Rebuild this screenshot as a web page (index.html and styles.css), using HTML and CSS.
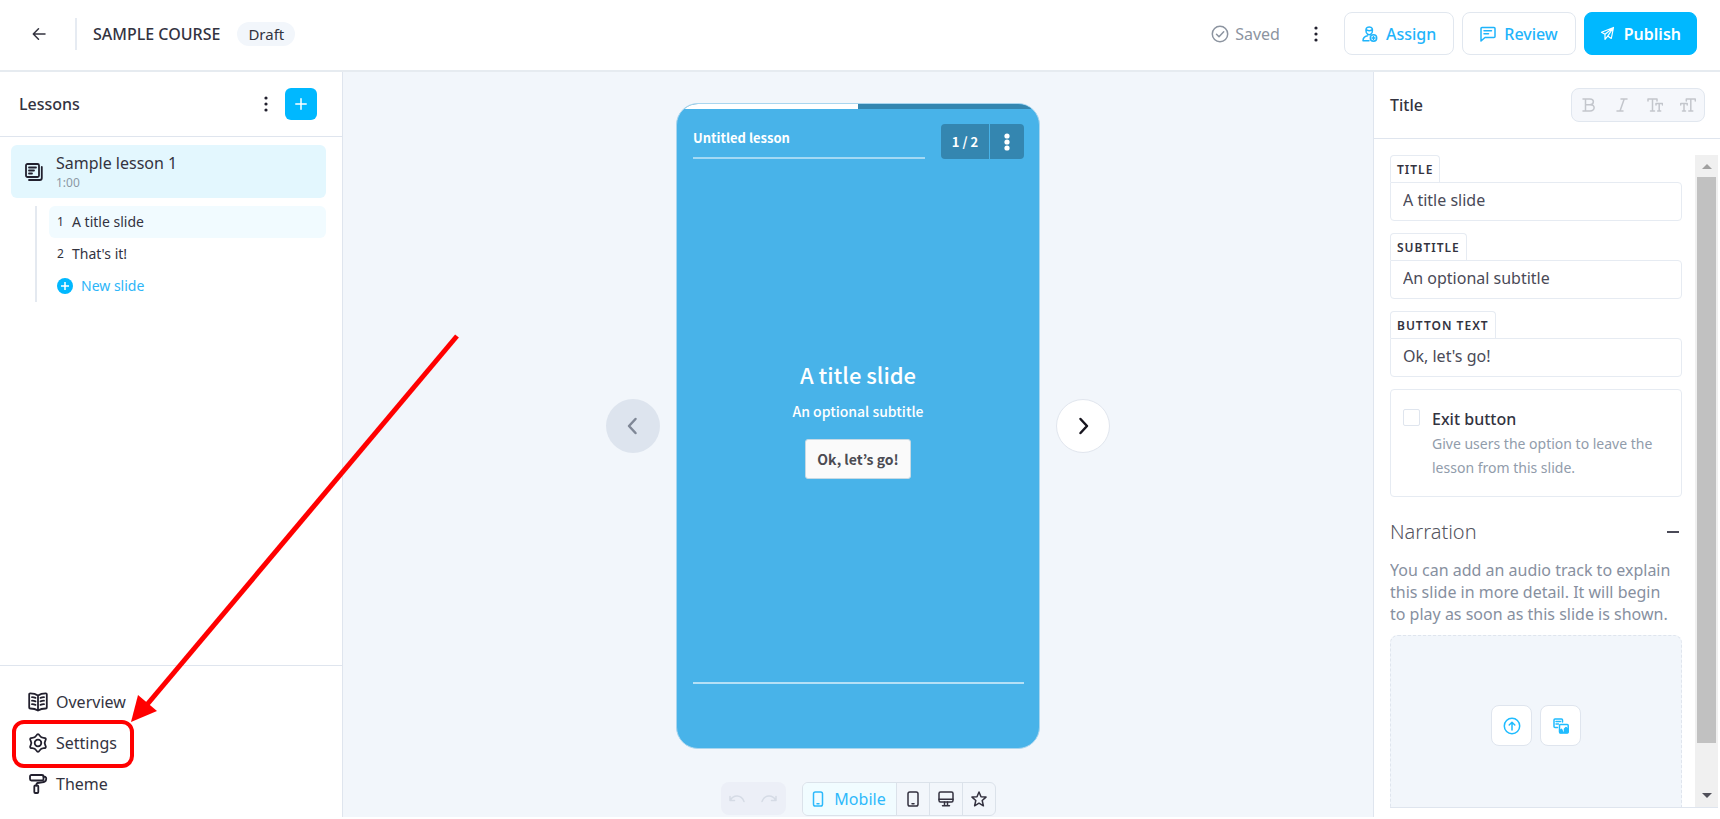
FILE: index.html
```html
<!DOCTYPE html>
<html lang="en">

<head>
    <meta charset="utf-8">
    <title>Sample course</title>
    <link rel="stylesheet" href="styles.css">
</head>

<body>
    <header class="topbar">
        <button class="back" aria-label="Back">
            <svg class="icon" width="14" height="14" viewBox="0 0 14 14"><path d="M13 7H1.500M6.500 1.800L1.300 7l5.200 5.200"/></svg>
        </button>
        <h1>SAMPLE COURSE</h1>
        <span class="badge">Draft</span>
        <div class="actions">
            <span class="saved">
                <svg class="icon" width="18" height="18" viewBox="0 0 18 18"><circle cx="9" cy="9" r="7.700"/><path d="M5.500 9.300l2.500 2.500 4.700-5"/></svg>
                Saved
            </span>
            <button class="dots" aria-label="More">
                <svg width="4" height="16" viewBox="0 0 4 16"><circle cx="2" cy="2" r="1.600"/><circle cx="2" cy="8" r="1.600"/><circle cx="2" cy="14" r="1.600"/></svg>
            </button>
            <button class="btn">
                <svg class="icon" width="16" height="16" viewBox="0 0 16 16"><path d="M4.300 6.500C3.300 2.800 4.300 1 7.200 1s3.900 1.800 2.900 5.500C9.500 8 8.700 8.800 7.200 8.800S4.900 8 4.300 6.500zM4.600 3.900c1.800 1 3.600 1 5.200 0M7 14.700H1c0-3 1.500-4.200 4.500-4.900"/><circle cx="11.500" cy="12" r="3.200"/><path d="M11.500 10.500v3M10 12h3"/></svg>
                Assign
            </button>
            <button class="btn">
                <svg class="icon" width="16" height="16" viewBox="0 0 16 16"><path d="M2 1.500h12a1 1 0 0 1 1 1v8a1 1 0 0 1-1 1H5L1 15V2.500a1 1 0 0 1 1-1zM4 4.800h7.500M4 7.800h4.500"/></svg>
                Review
            </button>
            <button class="btn primary">
                <svg class="icon" width="16" height="16" viewBox="0 0 16 16"><path d="M13.500 1.500L1.500 6.300l3.500 2 8.500-6.800-2.200 11-3.600-2.400zM5 8.300v5l2.700-3.200"/></svg>
                Publish
            </button>
        </div>
    </header>

    <main class="workspace">
        <aside class="sidebar">
            <div class="sidebar-head">
                <h2>Lessons</h2>
                <button class="dots" aria-label="Lesson options">
                    <svg width="4" height="16" viewBox="0 0 4 16"><circle cx="2" cy="2" r="1.600"/><circle cx="2" cy="8" r="1.600"/><circle cx="2" cy="14" r="1.600"/></svg>
                </button>
                <button class="add" aria-label="Add lesson">
                    <svg class="icon" width="12" height="12" viewBox="0 0 12 12"><path d="M6 .8v10.400M.8 6h10.400"/></svg>
                </button>
            </div>

            <a class="lesson" href="#">
                <svg class="icon" width="18" height="18" viewBox="0 0 18 18"><rect x="1" y="1" width="13" height="13" rx="1.500"/><path d="M4 4.500h7M4 7.500h5M4 10.500h3M16.800 4v11a2 2 0 0 1-2 2H4"/></svg>
                <span>
                    <span class="lesson-name">Sample lesson 1</span>
                    <span class="lesson-time">1:00</span>
                </span>
            </a>
            <div class="slides">
                <a class="slide active" href="#"><span class="num">1</span>A title slide</a>
                <a class="slide" href="#"><span class="num">2</span>That's it!</a>
                <button class="slide new">
                    <svg width="16" height="16" viewBox="0 0 16 16"><circle cx="8" cy="8" r="8" fill="#00b8ff"/><path d="M8 4v8M4 8h8" stroke="#fff" stroke-width="1.500"/></svg>
                    New slide
                </button>
            </div>

            <nav class="sidebar-nav">
                <a href="#">
                    <svg class="icon" width="20" height="20" viewBox="0 0 20 20"><path d="M10 3.500C8 2 5 1.300 2.200 1.300A1 1 0 0 0 1.200 2.300v13.200a1 1 0 0 0 1 1c2.800 0 5.800.7 7.800 2 2-1.300 5-2 7.800-2a1 1 0 0 0 1-1V2.300a1 1 0 0 0-1-1C15 1.300 12 2 10 3.500zM10 3.500v15M4 5.200c1.300 0 2.500.2 3.500.6M4 8.700c1.300 0 2.500.2 3.500.6M4 12.200c1.300 0 2.500.2 3.500.6M16 5.200c-1.300 0-2.500.2-3.500.6M16 8.700c-1.300 0-2.500.2-3.500.6M16 12.200c-1.300 0-2.500.2-3.500.6"/></svg>
                    Overview
                </a>
                <a class="marked" href="#">
                    <svg class="icon" width="20" height="20" viewBox="0 0 20 20"><circle cx="10" cy="10" r="3.300"/><path d="M8.300 2.600Q10-.4 11.700 2.600 13 4.800 15.600 4.800 19 4.800 17.300 7.800 16 10 17.300 12.200 19 15.200 15.600 15.200 13 15.200 11.700 17.400 10 20.400 8.300 17.400 7 15.200 4.400 15.200 1 15.200 2.700 12.200 4 10 2.700 7.800 1 4.800 4.400 4.800 7 4.800 8.300 2.600z"/></svg>
                    Settings
                    <svg class="arrow" width="330" height="392" viewBox="0 0 330 392"><path d="M326 2L14 373" stroke="#f00" stroke-width="5"/><path d="M0 388L7 361L26 377z" fill="#f00"/></svg>
                </a>
                <a href="#">
                    <svg class="icon" width="20" height="20" viewBox="0 0 20 20"><rect x="2" y="1" width="13.500" height="5.500" rx="1.500"/><path d="M15.500 2.500c3 .3 3 1.500 2.500 3.500-.3 1.500-1.500 2-4 2.300l-4.500.7c-1 .2-1.200.8-1.200 2.500"/><rect x="6.300" y="11.500" width="4" height="7.500" rx="1"/></svg>
                    Theme
                </a>
            </nav>
        </aside>

        <section class="canvas">
            <div class="stage">
                <button class="step" aria-label="Previous slide" disabled>
                    <svg class="icon" width="20" height="20" viewBox="0 0 20 20"><path d="M12.500 3L6 10l6.500 7"/></svg>
                </button>
                <article class="phone">
                    <div class="progress"><span></span></div>
                    <div class="phone-head">
                        <div class="phone-title">Untitled lesson</div>
                        <div class="pager">
                            <span>1 / 2</span>
                            <button aria-label="Slide menu">
                                <svg width="6" height="18" viewBox="0 0 6 18"><circle cx="3" cy="3" r="2.600"/><circle cx="3" cy="9" r="2.600"/><circle cx="3" cy="15" r="2.600"/></svg>
                            </button>
                        </div>
                    </div>
                    <div class="phone-body">
                        <h2>A title slide</h2>
                        <p>An optional subtitle</p>
                        <button>Ok, let’s go!</button>
                    </div>
                    <div class="phone-foot"></div>
                </article>
                <button class="step next" aria-label="Next slide">
                    <svg class="icon" width="20" height="20" viewBox="0 0 20 20"><path d="M7.500 3L14 10l-6.500 7"/></svg>
                </button>
            </div>

            <div class="canvas-tools">
                <div class="history">
                    <button aria-label="Undo" disabled>
                        <svg class="icon" width="16" height="10" viewBox="0 0 16 10"><path d="M1 2.500v4h4.500M1.500 6.200C4 1 12 0 15 7.500"/></svg>
                    </button>
                    <button aria-label="Redo" disabled>
                        <svg class="icon" width="16" height="10" viewBox="0 0 16 10"><path d="M15 2.500v4h-4.500M14.500 6.200C12 1 4 0 1 7.500"/></svg>
                    </button>
                </div>
                <div class="devices">
                    <button class="current">
                        <svg class="icon" width="12" height="16" viewBox="0 0 12 16"><rect x="1.500" y="1" width="9" height="14" rx="1.800"/><path d="M5 12.700h2"/></svg>
                        Mobile
                    </button>
                    <button aria-label="Tablet">
                        <svg class="icon" width="12" height="16" viewBox="0 0 12 16"><rect x="1" y="1" width="10" height="14" rx="1.800"/><path d="M5 12.700h2"/></svg>
                    </button>
                    <button aria-label="Desktop">
                        <svg class="icon" width="16" height="16" viewBox="0 0 16 16"><rect x="1" y="1" width="14" height="10" rx="1.500"/><path d="M1 8.300h14M6.500 11v3.500M9.500 11v3.500M4.500 14.700h7"/></svg>
                    </button>
                    <button aria-label="Favourites">
                        <svg class="icon" width="16" height="16" viewBox="0 0 16 16"><path d="M8 1l2 4.700 5 .4-3.800 3.400 1.200 5.300L8 12.200l-4.400 2.600 1.200-5.300L1 6.100l5-.4z"/></svg>
                    </button>
                </div>
            </div>
        </section>

        <aside class="panel">
            <div class="panel-head">
                <h2>Title</h2>
                <div class="format">
                    <button aria-label="Bold" disabled>
                        <svg class="icon" width="16" height="16" viewBox="0 0 16 16"><path d="M2 2h7c4.500 0 4.500 5.700 0 5.700H4.500M9 7.700c5.500 0 5.500 6.300 0 6.300H2M4.500 2v12"/></svg>
                    </button>
                    <button aria-label="Italic" disabled>
                        <svg class="icon" width="16" height="16" viewBox="0 0 16 16"><path d="M7 2h6M3 14h6M10.200 2L6 14"/></svg>
                    </button>
                    <button aria-label="Decrease text size" disabled>
                        <svg class="icon" width="16" height="16" viewBox="0 0 16 16"><path d="M1 4V2h9v2M5.500 2v12M3.500 14h4M9 8V6.500h6.500V8M12.200 6.500V14M10.700 14h3"/></svg>
                    </button>
                    <button aria-label="Increase text size" disabled>
                        <svg class="icon" width="16" height="16" viewBox="0 0 16 16"><path d="M6.300 4V2h9v2M10.800 2v12M8.800 14h4M.7 8V6.500h6.500V8M4 6.500V14M2.500 14h3"/></svg>
                    </button>
                </div>
            </div>

            <div class="panel-body">
                <form class="fields">
                    <div class="field">
                        <label for="title">TITLE</label>
                        <input id="title" type="text" value="A title slide">
                    </div>
                    <div class="field">
                        <label for="subtitle">SUBTITLE</label>
                        <input id="subtitle" type="text" value="An optional subtitle">
                    </div>
                    <div class="field">
                        <label for="button-text">BUTTON TEXT</label>
                        <input id="button-text" type="text" value="Ok, let's go!">
                    </div>

                    <div class="option">
                        <input id="exit" type="checkbox">
                        <label for="exit">
                            <strong>Exit button</strong>
                            <span>Give users the option to leave the lesson from this slide.</span>
                        </label>
                    </div>

                    <div class="section-head">
                        <h3>Narration</h3>
                        <button type="button" aria-label="Collapse"></button>
                    </div>
                    <p class="hint">You can add an audio track to explain this slide in more detail. It will begin to play as soon as this slide is shown.</p>
                    <div class="dropzone">
                        <button type="button" aria-label="Upload">
                            <svg class="icon" width="18" height="18" viewBox="0 0 18 18"><circle cx="9" cy="9" r="7.700"/><path d="M9 13V5.500M6.200 8L9 5.200 11.800 8"/></svg>
                        </button>
                        <button type="button" aria-label="Media library">
                            <svg class="icon" width="16" height="16" viewBox="0 0 16 16"><path d="M4.500 9.500H2a1 1 0 0 1-1-1V2a1 1 0 0 1 1-1h6.500a1 1 0 0 1 1 1v2M3 3.500h4.500M3 6h2.500"/><rect x="6.500" y="6.500" width="8.700" height="8.500" rx="1"/><path d="M7 14.800v-2.500l1.500-1 1.500 3.300zM11.500 14.500V11l1.500-1.500 1.700 1.500v3.500z" fill="currentColor"/></svg>
                        </button>
                    </div>
                </form>
                <div class="scrollbar">
                    <span class="up"></span>
                    <span class="thumb"></span>
                    <span class="down"></span>
                </div>
            </div>
        </aside>
    </main>
</body>

</html>
```

FILE: styles.css
```css
*,
*::after {
    box-sizing: border-box;
}

body {
    display: flex;
    flex-direction: column;
    height: 100vh;
    margin: 0;
    padding-bottom: 2px;
    background-color: #fff;
    color: #33333f;
    font-family: "Noto Sans", sans-serif;
    font-size: 16px;
    line-height: 22px;
}

h1, h2, h3, p {
    margin: 0;
    font-size: 16px;
    font-weight: 400;
}

a {
    color: inherit;
    text-decoration: none;
}

button {
    display: flex;
    align-items: center;
    justify-content: center;
    padding: 0;
    border: none;
    background: none;
    color: inherit;
    font: inherit;
    cursor: pointer;
}

svg {
    flex: none;
}

.icon {
    fill: none;
    stroke: currentColor;
    stroke-width: 1.5px;
    stroke-linecap: round;
    stroke-linejoin: round;
}

/* top bar */
.topbar {
    display: flex;
    align-items: center;
    flex: none;
    height: 72px;
    padding: 0 23px 3px 0;
    border-bottom: 2px solid #e6ebf0;
}

.back {
    width: 77px;
    height: 32px;
    padding-left: 2px;
    border-right: 2px solid #e6ebf2;
}

.topbar h1 {
    margin-left: 16px;
    font-weight: 500;
}

.badge {
    margin-left: 17px;
    padding: 1px 11px;
    border-radius: 12px;
    background-color: #f2f6fb;
    font-size: 15px;
}

.actions {
    display: flex;
    align-items: center;
    gap: 8px;
    margin-left: auto;
}

.saved {
    display: flex;
    align-items: center;
    gap: 6px;
    color: #8c94a0;
}

.dots {
    width: 32px;
    height: 32px;
    fill: #22202e;
}

.actions .dots {
    margin: 0 4px 0 12px;
}

.btn {
    gap: 8px;
    height: 43px;
    padding: 0 17px;
    border: 1px solid #e1e7ef;
    border-radius: 8px;
    color: #1fb4fb;
    font-weight: 500;
}

.btn.primary {
    padding: 0 15px;
    border-color: #00b8ff;
    background-color: #00b8ff;
    color: #fff;
    font-weight: 600;
}

.btn.primary .icon {
    stroke-width: 1.2px;
}

.workspace {
    display: flex;
    flex: 1;
    min-height: 0;
}

/* lessons */
.sidebar {
    display: flex;
    flex-direction: column;
    flex: none;
    width: 343px;
    border-right: 1px solid #dfe5ee;
}

.sidebar-head {
    display: flex;
    align-items: center;
    height: 65px;
    padding: 0 25px 0 19px;
    border-bottom: 1px solid #dfe5ee;
}

.sidebar-head h2,
.panel-head h2 {
    flex: 1;
    font-weight: 500;
}

.sidebar-head .dots {
    margin-right: 3px;
}

.add {
    width: 32px;
    height: 32px;
    border-radius: 6px;
    background-color: #00b8ff;
    color: #fff;
}

.lesson {
    display: flex;
    align-items: center;
    gap: 13px;
    height: 53px;
    margin: 8px 16px 8px 11px;
    padding-left: 14px;
    border-radius: 6px;
    background-color: #e3f7fe;
}

.lesson-name,
.lesson-time {
    display: block;
}

.lesson-time {
    color: #8c98a4;
    font-size: 12px;
    line-height: 18px;
}

.slides {
    margin: 0 16px 0 35px;
    padding-left: 12px;
    border-left: 2px solid #e4e9f0;
}

.slide {
    display: flex;
    align-items: center;
    justify-content: flex-start;
    width: 100%;
    height: 32px;
    padding-left: 8px;
    border-radius: 6px;
    font-size: 14px;
}

.slide.active {
    background-color: #f1fbff;
}

.num {
    width: 15px;
    font-size: 12px;
}

.slide.new {
    gap: 8px;
    color: #2db5f8;
}

.sidebar-nav {
    margin-top: auto;
    padding: 15px 0 13px;
    border-top: 1px solid #dfe5ee;
}

.sidebar-nav a {
    display: flex;
    align-items: center;
    gap: 8px;
    height: 41px;
    padding-left: 28px;
}

.sidebar-nav .icon,
.lesson .icon {
    color: #22202e;
    stroke-width: 1.8px;
}

.sidebar-nav .marked {
    position: relative;
}

.marked::after {
    content: "";
    position: absolute;
    top: -2px;
    left: 12px;
    width: 122px;
    height: 48px;
    border: 4px solid #f00;
    border-radius: 12px;
}

.arrow {
    position: absolute;
    left: 131px;
    bottom: 37px;
    z-index: 1;
    pointer-events: none;
}

/* slide preview */
.canvas {
    display: flex;
    flex-direction: column;
    flex: 1;
    min-width: 0;
    padding: 31px 16px 1px;
    background-color: #f2f6fb;
}

.stage {
    display: flex;
    align-items: center;
    justify-content: center;
    flex: 1;
    gap: 16px;
}

.step {
    width: 54px;
    height: 54px;
    border-radius: 50%;
    background-color: #dde4ee;
    color: #7f8796;
}

.step .icon {
    stroke-width: 2.5px;
}

.step.next {
    border: 1px solid #e1e6ee;
    background-color: #fff;
    color: #17151f;
}

.phone {
    display: flex;
    flex-direction: column;
    align-self: stretch;
    width: 364px;
    overflow: hidden;
    border: 1px solid #a9d6ef;
    border-radius: 22px;
    background-color: #48b3e9;
    color: #fff;
    font-family: "Noto Sans CJK JP", sans-serif;
}

.progress {
    height: 5px;
    background-color: #3486b0;
}

.progress span {
    display: block;
    width: 50%;
    height: 100%;
    background-color: #fff;
}

.phone-head {
    display: flex;
    align-items: flex-end;
    gap: 16px;
    padding: 15px 15px 0 16px;
}

.phone-title {
    flex: 1;
    height: 34px;
    padding-top: 2px;
    border-bottom: 2px solid #a3d9f4;
    font-size: 13px;
    font-weight: 700;
}

.pager {
    display: flex;
    align-items: center;
    gap: 1px;
    font-size: 13px;
    font-weight: 700;
}

.pager span,
.pager button {
    height: 35px;
    background-color: #3486b0;
    line-height: 35px;
}

.pager span {
    width: 48px;
    border-radius: 4px 0 0 4px;
    text-align: center;
}

.pager button {
    width: 34px;
    border-radius: 0 4px 4px 0;
    fill: #fff;
}

.phone-body {
    display: flex;
    flex-direction: column;
    align-items: center;
    justify-content: center;
    flex: 1;
    padding-bottom: 6px;
}

.phone-body h2 {
    font-size: 22px;
    font-weight: 500;
    line-height: 34px;
}

.phone-body p {
    margin: 9px 0 17px;
    font-size: 14px;
    font-weight: 500;
}

.phone-body button {
    height: 40px;
    padding: 0 11px;
    border: 1px solid #c5d9e4;
    border-radius: 3px;
    background-color: #fafafa;
    color: #4b4b52;
    font-size: 14px;
    font-weight: 700;
}

.phone-foot {
    height: 66px;
    margin: 0 15px 0 16px;
    border-top: 2px solid #b5e0f6;
}

.canvas-tools {
    display: flex;
    justify-content: center;
    gap: 16px;
    height: 34px;
    margin-top: 33px;
}

.history,
.devices {
    display: flex;
}

.history {
    width: 65px;
    height: 33px;
    border-radius: 8px;
    background-color: #eceff7;
    color: #d5dbe5;
}

.history button {
    flex: 1;
}

.devices {
    overflow: hidden;
    border: 1px solid #dbe2ea;
    border-radius: 6px;
    color: #33313f;
}

.devices button {
    width: 33px;
}

.devices button + button {
    border-left: 1px solid #dbe2ea;
}

.devices .current {
    gap: 10px;
    width: 93px;
    background-color: #f1fcff;
    color: #2db9fb;
}

/* slide settings */
.panel {
    display: flex;
    flex-direction: column;
    flex: none;
    width: 347px;
    padding-bottom: 9px;
    border-left: 1px solid #dfe5ee;
}

.panel-head {
    display: flex;
    align-items: center;
    flex: none;
    height: 67px;
    padding: 0 15px 0 16px;
    border-bottom: 1px solid #dfe5ee;
}

.format {
    display: flex;
    width: 134px;
    height: 34px;
    border: 1px solid #e1e7ef;
    border-radius: 8px;
    background-color: #f5f7fb;
    color: #c3c6cc;
}

.format button {
    flex: 1;
}

.panel-body {
    display: flex;
    flex: 1;
    min-height: 0;
    margin: 16px 2px 0 16px;
    border-bottom: 1px solid #dfe5ee;
}

.fields {
    flex: 1;
    min-width: 0;
    overflow: hidden;
    margin-right: 13px;
}

.field {
    display: flex;
    flex-direction: column;
    align-items: flex-start;
    margin-bottom: 12px;
}

.field label {
    height: 27px;
    padding: 0 6px;
    border: 1px solid #e6ebf2;
    border-bottom: none;
    border-radius: 4px 4px 0 0;
    font-size: 12px;
    font-weight: 600;
    letter-spacing: 1px;
    line-height: 27px;
}

.field input {
    width: 100%;
    height: 39px;
    padding: 0 12px 3px;
    border: 1px solid #e6ebf2;
    border-radius: 0 4px 4px 4px;
    color: #4a4a57;
    font: inherit;
}

.option {
    display: flex;
    gap: 12px;
    height: 108px;
    padding: 18px 12px;
    border: 1px solid #e6ebf2;
    border-radius: 4px;
}

.option input {
    appearance: none;
    flex: none;
    width: 17px;
    height: 17px;
    margin: 1px 0;
    border: 1px solid #dfe5ee;
    border-radius: 2px;
}

.option strong,
.option span {
    display: block;
}

.option strong {
    margin-bottom: 2px;
    font-weight: 500;
}

.option span {
    color: #919cab;
    font-size: 14px;
    line-height: 24px;
}

.section-head {
    display: flex;
    align-items: center;
    justify-content: space-between;
    margin: 24px 0 16px;
}

.section-head h3 {
    color: #555560;
    font-size: 20px;
    font-weight: 300;
}

.section-head button {
    width: 12px;
    height: 2px;
    margin-right: 3px;
    background-color: #4a4a57;
}

.hint {
    margin-bottom: 10px;
    padding-right: 8px;
    color: #87909f;
}

.dropzone {
    display: flex;
    align-items: center;
    justify-content: center;
    gap: 8px;
    height: 181px;
    border: 1px dashed #dfe5ee;
    border-radius: 8px;
    background-color: #f2f6fb;
}

.dropzone button {
    width: 41px;
    height: 41px;
    border: 1px solid #dfe5ee;
    border-radius: 8px;
    background-color: #fff;
    color: #1fbcff;
}

.scrollbar {
    display: flex;
    flex-direction: column;
    align-items: center;
    width: 23px;
    background-color: #f0f0f0;
}

.scrollbar .up,
.scrollbar .down {
    border: 5px solid transparent;
}

.scrollbar .up {
    margin: 4px 0 8px;
    border-bottom-color: #a0a0a0;
}

.scrollbar .down {
    margin: 50px 0 4px;
    border-top-color: #50505a;
}

.scrollbar .thumb {
    flex: 1;
    width: 19px;
    background-color: #c1c1c1;
}
```
